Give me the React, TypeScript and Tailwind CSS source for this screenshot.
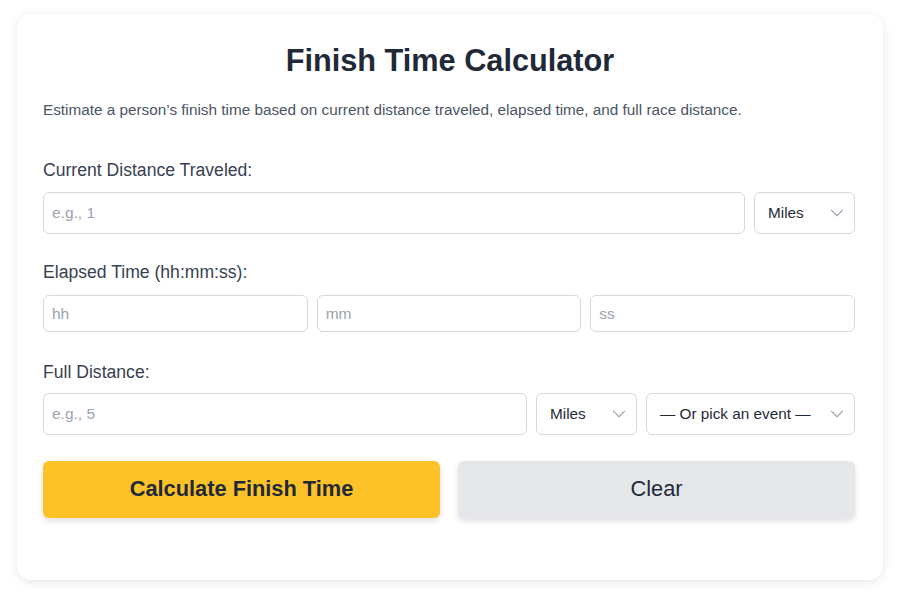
import { ChevronDown } from 'lucide-react';

function Select({ label, className = '' }: { label: string; className?: string }) {
  return (
    <div
      className={`flex items-center justify-between rounded-md border border-[#d5d8de] bg-white pl-[13px] pr-[6px] text-[15.3px] text-[#1f2937] ${className}`}
    >
      <span>{label}</span>
      <ChevronDown className="h-[22px] w-[22px] text-[#a3a8b3]" strokeWidth={1.3} />
    </div>
  );
}

function Field({ placeholder, className = '' }: { placeholder: string; className?: string }) {
  return (
    <input
      placeholder={placeholder}
      className={`rounded-md border border-[#d5d8de] bg-white px-[8px] text-[15.5px] text-[#1f2937] placeholder:text-[#9ca3af] outline-none ${className}`}
    />
  );
}

export default function App() {
  return (
    <div
      className="min-h-[600px] bg-white px-[17px] pt-[14px]"
      style={{ fontFamily: '"Liberation Sans", Arial, sans-serif' }}
    >
      <div className="h-[566px] rounded-[14px] bg-white px-[26px] pt-[28px] shadow-[0_2px_10px_rgba(0,0,0,0.10)]">
        <h1 className="text-center text-[30.7px] font-bold leading-[38px] text-[#1f2937]">
          Finish Time Calculator
        </h1>
        <p className="mt-[20px] text-[15.3px] leading-[20px] text-[#4b5563]">
          Estimate a person’s finish time based on current distance traveled, elapsed time, and full race distance.
        </p>

        <label className="mt-[40px] block text-[17.6px] leading-[20px] text-[#374151]">Current Distance Traveled:</label>
        <div className="mt-[12px] flex gap-[9px] pr-[2px]">
          <Field placeholder="e.g., 1" className="h-[42px] flex-1" />
          <Select label="Miles" className="h-[42px] w-[101px]" />
        </div>

        <label className="mt-[28px] block text-[17.6px] leading-[20px] text-[#374151]">Elapsed Time (hh:mm:ss):</label>
        <div className="mt-[13px] grid grid-cols-3 gap-[9px] pr-[2px]">
          <Field placeholder="hh" className="h-[37px] min-w-0" />
          <Field placeholder="mm" className="h-[37px] min-w-0" />
          <Field placeholder="ss" className="h-[37px] min-w-0" />
        </div>

        <label className="mt-[30px] block text-[17.6px] leading-[20px] text-[#374151]">Full Distance:</label>
        <div className="mt-[11px] flex gap-[9px] pr-[2px]">
          <Field placeholder="e.g., 5" className="h-[42px] min-w-0 flex-1" />
          <Select label="Miles" className="h-[42px] w-[101px]" />
          <Select label="— Or pick an event —" className="h-[42px] w-[209px]" />
        </div>

        <div className="mt-[26px] grid grid-cols-2 gap-[18px] pr-[2px]">
          <button className="h-[57px] rounded-md bg-[#fcc227] text-[21.8px] font-bold text-[#1f2937] shadow-[0_3px_6px_rgba(0,0,0,0.12)]">
            Calculate Finish Time
          </button>
          <button className="h-[57px] rounded-md bg-[#e5e7eb] text-[21.8px] text-[#1f2937] shadow-[0_3px_6px_rgba(0,0,0,0.12)]">
            Clear
          </button>
        </div>
      </div>
    </div>
  );
}
